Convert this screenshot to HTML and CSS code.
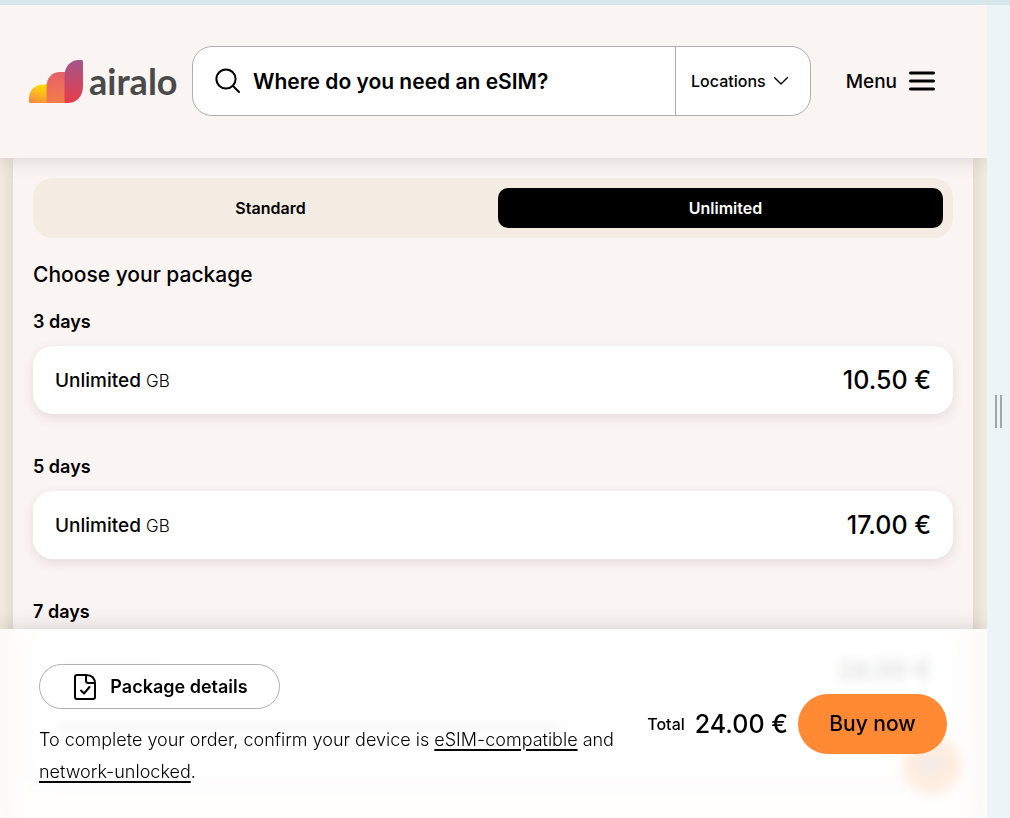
FILE: index.html
```html
<!DOCTYPE html>
<html lang="en">
<head>
<meta charset="utf-8">
<meta name="viewport" content="width=device-width, initial-scale=1">
<title>Airalo eSIM packages</title>
<link rel="stylesheet" href="styles.css">
</head>
<body>
<div class="stage">
  <div class="app">
    <header class="header">
      <a class="logo" href="#">
        <svg class="logo-mark" viewBox="0 0 54 43" aria-hidden="true">
          <defs>
            <linearGradient id="g1" x1=".65" y1="0" x2=".3" y2="1"><stop offset="0.1" stop-color="#ffd60a"/><stop offset="1" stop-color="#f58a3c"/></linearGradient>
            <linearGradient id="g2" x1=".4" y1="0" x2=".5" y2="1"><stop offset="0" stop-color="#e6606a"/><stop offset="1" stop-color="#f27d4b"/></linearGradient>
            <linearGradient id="g3" x1=".5" y1="0" x2=".5" y2="1"><stop offset="0" stop-color="#a4558a"/><stop offset="1" stop-color="#e83c4b"/></linearGradient>
          </defs>
          <path fill="url(#g1)" d="M0 41.500V39C0 30 6 24.500 14 24.500H18V43H1.500Q0 43 0 41.500Z"/>
          <path fill="url(#g2)" d="M17.500 43V27C17.500 18 23 12 31 12H36V43Z"/>
          <path fill="url(#g3)" d="M35.500 43V16C35.500 6 42 0 50 0H52.500Q54 0 54 1.500V26C54 37 47 43 38.500 43Z"/>
        </svg>
        <span class="logo-text">airalo</span>
      </a>
      <form class="search">
        <label class="search-field">
          <svg class="icon-search" viewBox="0 0 26 26" aria-hidden="true"><circle cx="11" cy="11" r="9.600"/><path d="M18 18l6 6"/></svg>
          <input class="search-input" type="text" aria-label="Where do you need an eSIM?" placeholder="Where do you need an eSIM?">
        </label>
        <button class="locations" type="button">Locations
          <svg class="icon-chevron" viewBox="0 0 14 8" aria-hidden="true"><path d="M.7.7L7 7L13.300.7"/></svg>
        </button>
      </form>
      <button class="menu" type="button">Menu
        <svg class="icon-menu" viewBox="0 0 26 20" aria-hidden="true"><path d="M1.500 2h23M1.500 10h23M1.500 18h23"/></svg>
      </button>
    </header>

    <main class="page">
      <section class="panel">
        <div class="tabs" role="tablist">
          <button class="tab" type="button" role="tab" aria-selected="false">Standard</button>
          <button class="tab tab-active" type="button" role="tab" aria-selected="true">Unlimited</button>
        </div>
        <h1 class="title">Choose your package</h1>
        <div class="packages">
          <section class="package">
            <h2 class="duration">3 days</h2>
            <div class="card"><div class="card-row"><span class="amount">Unlimited <small class="unit">GB</small></span><span class="price">10.50 €</span></div></div>
          </section>
          <section class="package">
            <h2 class="duration">5 days</h2>
            <div class="card"><div class="card-row"><span class="amount">Unlimited <small class="unit">GB</small></span><span class="price">17.00 €</span></div></div>
          </section>
          <section class="package">
            <h2 class="duration">7 days</h2>
            <div class="card"><div class="card-row"><span class="line line-short"></span><span class="price">24.00 €</span></div>
              <div class="note"><span class="line line-long"></span></div>
            </div>
          </section>
        </div>
      </section>
    </main>

    <div class="chat"><span class="chat-glyph"></span></div>

    <footer class="checkout">
      <div class="checkout-info">
        <button class="details" type="button">
          <svg class="icon-file" viewBox="0 0 22 26" aria-hidden="true"><path d="M12 1H3Q1 1 1 3V23Q1 25 3 25H19Q21 25 21 23V10Q21 1 12 1V6.500Q12 9 14.500 9H21M7 16.500L10 19.500L15.500 13"/></svg>
          Package details
        </button>
        <p class="confirm">To complete your order, confirm your device is <a class="link" href="#">eSIM-compatible</a> and <a class="link" href="#">network-unlocked</a>.</p>
      </div>
      <div class="checkout-pay">
        <span class="total">Total</span>
        <span class="price">24.00 €</span>
        <button class="buy" type="button">Buy now</button>
      </div>
    </footer>
  </div>
  <div class="gutter"><span class="grip"></span></div>
</div>
</body>
</html>
```
FILE: styles.css
```css
* { box-sizing: border-box; }
body {
  margin: 0;
  height: 100vh;
  padding-top: 5px;
  overflow: hidden;
  background: #d7e8ea;
  color: #000;
  font-family: Inter, "Open Sans", sans-serif;
  font-weight: 500;
}
h1, h2, p { margin: 0; font-weight: 500; }
button, input { font: inherit; color: inherit; border: 0; background: none; padding: 0; margin: 0; }
button { cursor: pointer; white-space: nowrap; }
svg { fill: none; stroke: #000; stroke-width: 2; stroke-linecap: round; stroke-linejoin: round; flex: none; }

.stage { display: flex; height: 100%; background: #ebf5f8; }
.app { position: relative; flex: 1; min-width: 0; overflow: hidden; background: #f4ebe2; display: flex; flex-direction: column; }
.gutter { width: 23px; display: flex; align-items: center; justify-content: center; }
.grip { width: 7px; height: 33px; border: solid #a2a7a8; border-width: 0 2px; }

.header {
  position: relative;
  z-index: 1;
  flex: none;
  display: flex;
  align-items: center;
  height: 153px;
  padding: 0 52px 1px 29px;
  background: #faf4f2;
  box-shadow: 0 0 20px rgba(0, 0, 0, .16);
}
.logo { display: flex; align-items: center; gap: 6px; width: 148px; color: #4a4a4a; text-decoration: none; }
.logo-mark { width: 54px; height: 43px; stroke: none; }
.logo-text { font-family: Lato, sans-serif; font-weight: 700; font-size: 36px; line-height: 40px; }
.search { flex: 1; min-width: 0; display: flex; height: 70px; margin: 0 35px 0 15px; border: 1px solid #aeaeae; border-radius: 20px; background: #fff; }
.search-field { flex: 1; min-width: 0; display: flex; align-items: center; gap: 12px; padding-left: 22px; }
.icon-search { width: 26px; height: 26px; }
.search-input { flex: 1; min-width: 0; font-size: 21px; font-weight: 600; outline: 0; }
.search-input::placeholder { color: #000; opacity: 1; }
.locations { display: flex; align-items: center; gap: 8px; padding: 0 22px 0 15px; border-left: 1px solid #aeaeae; font-size: 16px; }
.icon-chevron { width: 14px; height: 8px; stroke-width: 1.4; }
.menu { display: flex; align-items: center; gap: 12px; font-size: 19px; }
.icon-menu { width: 26px; height: 20px; stroke-width: 3; }

.page { flex: 1; min-height: 0; padding: 0 14px 0 13px; }
.panel { padding: 20px; min-height: 100%; background: #faf4f2; box-shadow: 0 0 20px rgba(0, 0, 0, .12); }
.tabs { display: flex; gap: 10px; padding: 10px; border-radius: 20px; background: #f4ebe2; }
.tab { flex: 1; height: 40px; padding-left: 10px; border-radius: 10px; font-size: 16px; font-weight: 600; }
.tab-active { background: #000; color: #fff; }
.title { margin: 20px 0 17px; font-size: 21px; line-height: 33px; }
.packages { display: flex; flex-direction: column; gap: 39px; }
.package { display: flex; flex-direction: column; gap: 10px; }
.duration { font-size: 18px; line-height: 28px; font-weight: 600; }
.card { padding: 0 22px; border-radius: 20px; background: #fff; box-shadow: 0 4px 12px rgba(90, 60, 50, .12); }
.card-row { display: flex; align-items: center; justify-content: space-between; height: 68px; }
.amount { font-size: 19px; }
.unit { font-size: 17px; font-weight: 300; }
.price { font-size: 25px; white-space: nowrap; }
.note { padding: 18px 0 44px; }
.line { display: block; height: 10px; border-radius: 5px; background: #ccc; }
.line-short { width: 114px; }
.line-long { width: 508px; max-width: 100%; height: 9px; }
.chat { position: absolute; right: 26px; bottom: 24px; width: 58px; height: 58px; display: grid; place-items: center; border-radius: 50%; background: #ff8a33; }
.chat-glyph { width: 26px; height: 22px; border-radius: 6px; background: #c08a68; }

.checkout {
  position: absolute;
  z-index: 2;
  inset: auto 0 0;
  display: flex;
  align-items: center;
  justify-content: space-between;
  padding: 0 40px 0 39px;
  background: rgba(255, 255, 255, .84);
  backdrop-filter: blur(6px);
  box-shadow: 0 0 20px rgba(0, 0, 0, .16);
}
.checkout-info { flex: 1; min-width: 0; padding: 35px 0 30px; }
.details { display: flex; align-items: center; justify-content: center; gap: 14px; width: 241px; height: 45px; padding-left: 3px; border: 1px solid #aeaeae; border-radius: 23px; background: #fff; font-size: 18px; font-weight: 600; }
.icon-file { width: 22px; height: 26px; }
.confirm { margin-top: 15px; font-size: 18px; line-height: 32px; font-weight: 300; }
.link { color: inherit; text-decoration: underline; text-decoration-thickness: 2px; text-underline-offset: 3px; }
.checkout-pay { display: flex; align-items: center; gap: 10px; }
.total { font-size: 16px; }
.buy { width: 149px; height: 60px; border-radius: 30px; background: #ff8a33; font-size: 21px; }
```
